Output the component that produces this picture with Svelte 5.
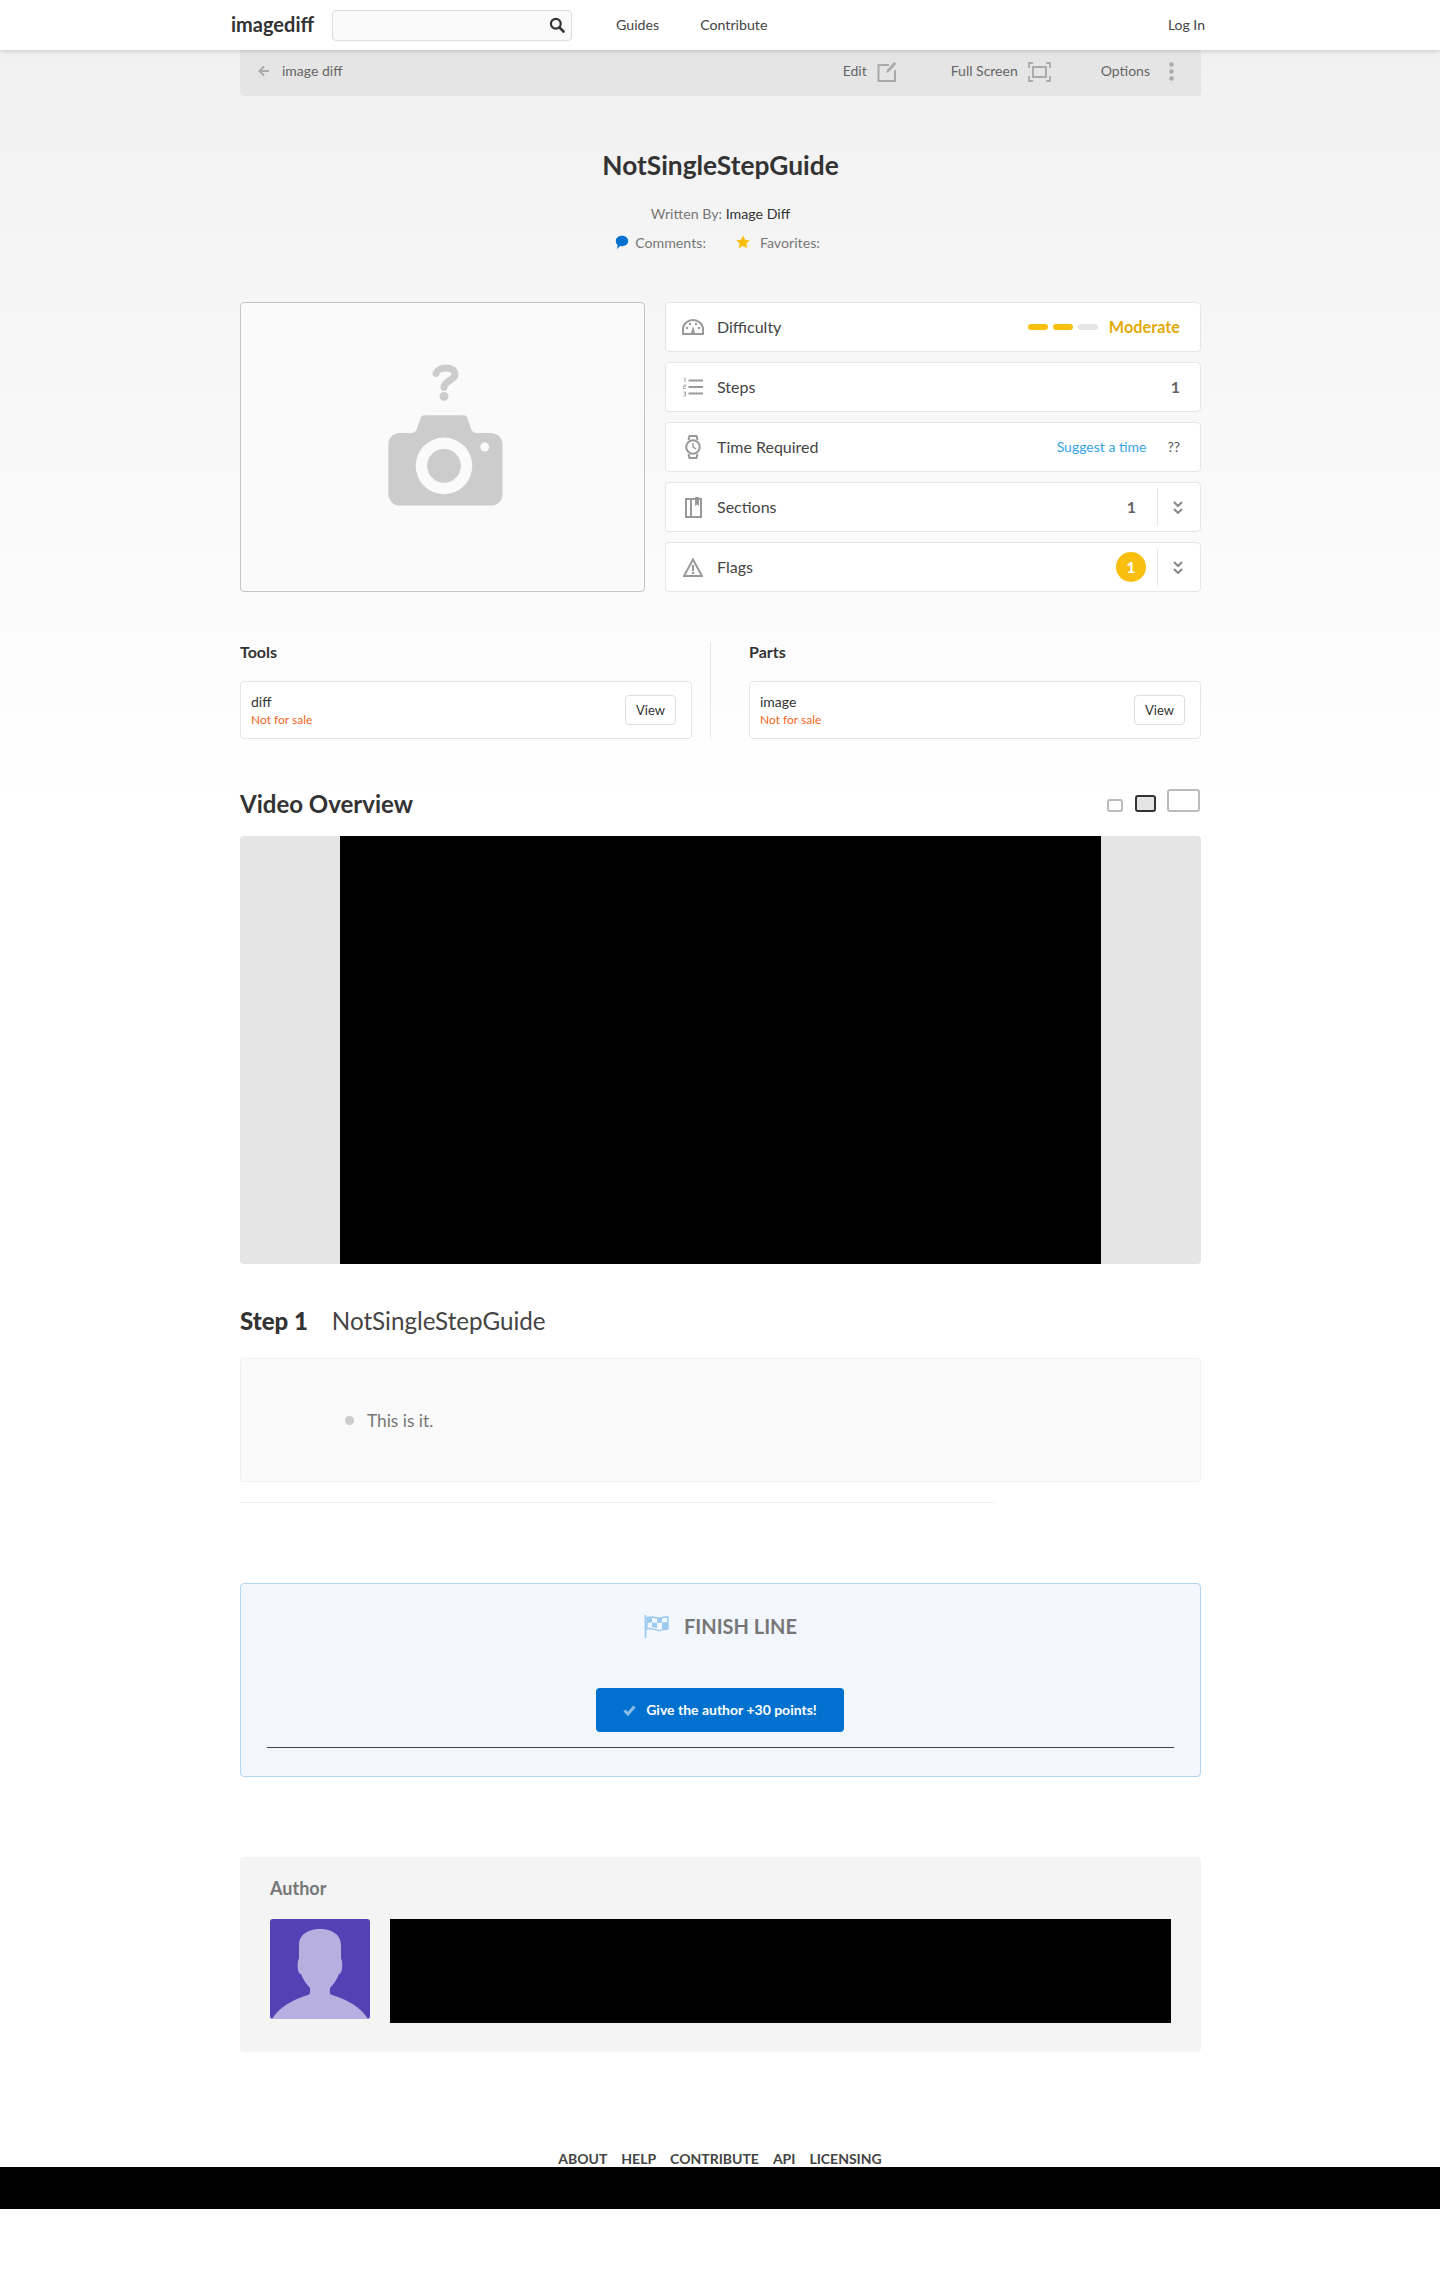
<script>
    const rows = [
        { label: 'Steps', value: '1' }
    ];
    const links = ['About', 'Help', 'Contribute', 'API', 'Licensing'];
</script>

<header class="topbar">
    <div class="topbar-inner">
        <a class="logo" href="#top">imagediff</a>
        <div class="search">
            <svg width="16" height="16" viewBox="0 0 16 16"><circle cx="6.800" cy="6.800" r="4.900" fill="none" stroke="#333" stroke-width="2.200"/><path d="M10.400 10.400 14.500 14.500" stroke="#333" stroke-width="2.600" stroke-linecap="round"/></svg>
        </div>
        <nav class="nav">
            <a href="#top">Guides</a>
            <a href="#top">Contribute</a>
        </nav>
        <a class="login" href="#top">Log In</a>
    </div>
</header>

<main class="page">
    <div class="toolbar">
        <a class="back" href="#top">
            <svg width="12" height="12" viewBox="0 0 12 12"><path d="M11 6H2M6 1.500 1.500 6 6 10.500" fill="none" stroke="#aaa" stroke-width="2"/></svg>
            <span>image diff</span>
        </a>
        <div class="actions">
            <a class="action edit" href="#top"><span>Edit</span>
                <svg width="20" height="21" viewBox="0 0 20 21"><path d="M12 4H1.500v16H18V9" fill="none" stroke="#aaa" stroke-width="2"/><path d="M9 12 10 9 17 1l2.500 1.500-7 8z" fill="#aaa"/></svg>
            </a>
            <a class="action full" href="#top"><span>Full Screen</span>
                <svg width="23" height="20" viewBox="0 0 23 20"><path d="M1 6V1h4M18 1h4v5M22 14v5h-4M5 19H1v-5" fill="none" stroke="#aaa" stroke-width="1.800"/><rect x="5" y="5" width="13" height="10" fill="none" stroke="#aaa" stroke-width="2"/></svg>
            </a>
            <a class="action options" href="#top"><span>Options</span>
                <svg width="5" height="19" viewBox="0 0 5 19"><circle cx="2.500" cy="2.500" r="2.200" fill="#aaa"/><circle cx="2.500" cy="9.500" r="2.200" fill="#aaa"/><circle cx="2.500" cy="16.500" r="2.200" fill="#aaa"/></svg>
            </a>
        </div>
    </div>

    <h1>NotSingleStepGuide</h1>
    <p class="byline">Written By: <a href="#top">Image Diff</a></p>
    <div class="meta">
        <span class="meta-item comments">
            <svg width="14" height="15" viewBox="0 0 14 15"><path d="M7 .8c3.400 0 6.200 2.200 6.200 5.200S10.400 11.200 7 11.200c-.7 0-1.300-.1-1.900-.2L1.800 14.200l1-3.900C1.400 9.100.8 7.700.8 6 .8 3 3.600.8 7 .8z" fill="#0071ce"/></svg>
            Comments:
        </span>
        <span class="meta-item">
            <svg width="14" height="14" viewBox="0 0 14 14"><path d="M7 .3l2.100 4.400 4.700.6-3.400 3.200.9 4.800L7 11l-4.300 2.300.9-4.800L.2 5.300l4.700-.6z" fill="#f9bf0f"/></svg>
            Favorites:
        </span>
    </div>

    <section class="hero">
        <div class="placeholder">
            <svg width="403" height="288" viewBox="0 0 405 290">
                <path d="M197 71C199 64 215 63 216 71 217 78 205 78 205 85" fill="none" stroke="#ccc" stroke-width="7" stroke-linecap="round"/>
                <circle cx="205" cy="94" r="4.500" fill="#ccc"/>
                <path d="M160 131h11c4 0 6-2 7-5l3-9c1-3 2-4 5-4h38c3 0 4 1 5 4l3 9c1 3 3 5 7 5h13c7 0 12 5 12 12v49c0 7-5 12-12 12h-91c-7 0-12-5-12-12v-49c0-7 5-12 11-12z" fill="#ccc"/>
                <circle cx="205" cy="164" r="28.500" fill="#fafafa"/>
                <circle cx="205" cy="164" r="17" fill="#ccc"/>
                <circle cx="246" cy="145" r="4.500" fill="#fafafa"/>
            </svg>
        </div>
        <div class="stats">
            <div class="stat">
                <span class="stat-icon">
                    <svg width="22" height="16" viewBox="0 0 22 16"><path d="M1 15V10a10 9 0 0 1 20 0v5z" fill="none" stroke="#999" stroke-width="2"/><path d="M11 7 9 14h4z" fill="#999"/><path d="M1 14h20v2H1z" fill="#999"/><circle cx="5" cy="9" r="1.200" fill="#999"/><circle cx="8" cy="5" r="1.200" fill="#999"/><circle cx="14" cy="5" r="1.200" fill="#999"/><circle cx="17" cy="9" r="1.200" fill="#999"/></svg>
                </span>
                <span class="stat-label">Difficulty</span>
                <span class="pills"><i class="on"></i><i class="on"></i><i></i></span>
                <span class="moderate">Moderate</span>
            </div>
            {#each rows as row}
                <div class="stat">
                    <span class="stat-icon">
                        <svg width="20" height="20" viewBox="0 0 20 20"><g fill="none" stroke="#999" stroke-width="1.800"><path d="M5.500 3.500H20M5.500 10H20M5.500 16.500H20"/></g><g stroke="#aaa" stroke-width="1" fill="none"><path d="M1 1.500l1-.8v4.500M.5 8h2v1.500h-2v2h2.200M.5 15h2v4h-2M1 17h1.500"/></g></svg>
                    </span>
                    <span class="stat-label">{row.label}</span>
                    <span class="stat-value">{row.value}</span>
                </div>
            {/each}
            <div class="stat">
                <span class="stat-icon">
                    <svg width="16" height="24" viewBox="0 0 16 24"><circle cx="8" cy="12" r="6.800" fill="none" stroke="#999" stroke-width="2"/><path d="M3.500 5 4.500 1h7l1 4M3.500 19l1 4h7l1-4" fill="none" stroke="#999" stroke-width="2"/><path d="M8 8v4l3 2" fill="none" stroke="#999" stroke-width="1.400"/></svg>
                </span>
                <span class="stat-label">Time Required</span>
                <a class="suggest" href="#top">Suggest a time</a>
                <span class="unknown">??</span>
            </div>
            <div class="stat split">
                <span class="stat-icon">
                    <svg width="17" height="21" viewBox="0 0 17 21"><path d="M1 2h15v18H1zM6 2v18" fill="none" stroke="#999" stroke-width="2"/><path d="M10 0h4v9l-2-1.500L10 9z" fill="#999"/></svg>
                </span>
                <span class="stat-label">Sections</span>
                <span class="stat-value">1</span>
                <span class="toggle">
                    <svg width="10" height="13" viewBox="0 0 10 13"><path d="M1 1l4 4 4-4M1 8l4 4 4-4" fill="none" stroke="#888" stroke-width="2"/></svg>
                </span>
            </div>
            <div class="stat split">
                <span class="stat-icon">
                    <svg width="20" height="19" viewBox="0 0 20 19"><path d="M10 1.500 1 18h18z" fill="none" stroke="#999" stroke-width="2"/><path d="M10 7v6M10 14v2" stroke="#999" stroke-width="2"/></svg>
                </span>
                <span class="stat-label">Flags</span>
                <span class="badge">1</span>
                <span class="toggle">
                    <svg width="10" height="13" viewBox="0 0 10 13"><path d="M1 1l4 4 4-4M1 8l4 4 4-4" fill="none" stroke="#888" stroke-width="2"/></svg>
                </span>
            </div>
        </div>
    </section>

    <section class="supplies">
        <div class="supply">
            <h3>Tools</h3>
            <div class="item">
                <div>
                    <div class="item-name">diff</div>
                    <div class="item-note">Not for sale</div>
                </div>
                <button>View</button>
            </div>
        </div>
        <div class="supply">
            <h3>Parts</h3>
            <div class="item">
                <div>
                    <div class="item-name">image</div>
                    <div class="item-note">Not for sale</div>
                </div>
                <button>View</button>
            </div>
        </div>
    </section>

    <div class="video-head">
        <h2>Video Overview</h2>
        <div class="sizes">
            <span class="size small"></span>
            <span class="size medium"></span>
            <span class="size large"></span>
        </div>
    </div>
    <div class="video"><div class="video-frame"></div></div>

    <h2 class="step-title"><strong>Step 1</strong><span>NotSingleStepGuide</span></h2>
    <div class="step-box">
        <ul><li>This is it.</li></ul>
    </div>
    <hr />

    <section class="finish">
        <div class="finish-title">
            <svg width="25" height="23" viewBox="0 0 25 23">
                <path d="M1.500 0v23" stroke="#9cc9ee" stroke-width="1.800"/>
                <path d="M3 3c6-3 8 1 13 0 3-.6 5-1.200 8-1v12c-3-.2-5 1-8 1.400-5 .6-7-3.400-13-1.400z" fill="none" stroke="#9cc9ee" stroke-width="1.400"/>
                <path d="M3 3l5-.6v4.800l-5 1zM13 3l5-.6v5l-5 .6zM8 7.200l5 1v5l-5-1.400zM18 7.400l6-.4v7l-6 .4z" fill="#9cc9ee"/>
            </svg>
            FINISH LINE
        </div>
        <button class="points">
            <svg width="13" height="11" viewBox="0 0 13 11"><path d="M1.500 5.500 5 9l6.500-7.500" fill="none" stroke="#8fbde9" stroke-width="3"/></svg>
            <span>Give the author +30 points!</span>
        </button>
        <div class="finish-line"></div>
    </section>

    <section class="author">
        <h4>Author</h4>
        <div class="author-row">
            <svg class="avatar" width="100" height="100" viewBox="0 0 100 100">
                <rect width="100" height="100" rx="3" fill="#5442b4"/>
                <path d="M2 100C9 88 24 80 38 76 41 75 40 72 40 69 36 65 33 60 31 55 27 55 27 41 29 40V26C29 15 39 10 50 10S71 15 71 26V40C73 41 73 55 69 55 67 60 64 65 60 69 60 72 59 75 62 76 76 80 91 88 98 100z" fill="#b7afdf"/>
            </svg>
            <div class="author-bio"></div>
        </div>
    </section>
</main>

<footer class="footer">
    <nav class="footer-links">
        {#each links as link}
            <a href="#top">{link}</a>
        {/each}
    </nav>
    <div class="footer-band"></div>
</footer>

<style>
    :global(body) {
        margin: 0;
        min-height: 2283px;
        font-family: Lato, "Liberation Sans", sans-serif;
        color: #333;
        background: linear-gradient(#f1f1f1 50px, #fff 800px) no-repeat #fff;
    }

    a {
        color: inherit;
        text-decoration: none;
    }

    .topbar {
        position: relative;
        z-index: 2;
        height: 50px;
        background: #fff;
        box-shadow: 0 1px 5px rgba(0,0,0,0.18);
    }

    .topbar-inner {
        width: 974px;
        height: 50px;
        margin: 0 auto 0 231px;
        display: flex;
        align-items: center;
        font-size: 14px;
    }

    .logo {
        width: 101px;
        padding-bottom: 2px;
        font-size: 20px;
        font-weight: 700;
    }

    .search {
        box-sizing: border-box;
        width: 240px;
        height: 31px;
        padding-right: 6px;
        display: flex;
        align-items: center;
        justify-content: flex-end;
        background: #fafafa;
        border: 1px solid #ddd;
        border-radius: 4px;
    }

    .nav {
        display: flex;
        gap: 41px;
        margin-left: 44px;
        padding-bottom: 2px;
        font-size: 14.200px;
        color: #444;
    }

    .login {
        margin-left: auto;
        padding-bottom: 2px;
        color: #444;
    }

    .page {
        width: 961px;
        margin-left: 240px;
    }

    .toolbar {
        box-sizing: border-box;
        height: 46px;
        padding: 0 27px 0 18px;
        display: flex;
        align-items: center;
        justify-content: space-between;
        background: #e5e5e5;
        border-radius: 0 0 4px 4px;
        font-size: 14px;
        color: #666;
    }

    .toolbar span {
        padding-bottom: 6px;
    }

    .back, .action {
        display: flex;
        align-items: center;
    }

    .back {
        gap: 12px;
    }

    .back svg {
        margin-bottom: 5px;
    }

    .action svg {
        margin-bottom: 3px;
    }

    .actions {
        display: flex;
        align-items: center;
    }

    .action {
        gap: 10px;
    }

    .edit {
        margin-right: 54px;
    }

    .full {
        margin-right: 50px;
    }

    .options {
        gap: 19px;
    }

    h1 {
        margin: 53px 0 0;
        font-size: 26.300px;
        line-height: 32px;
        font-weight: 700;
        text-align: center;
    }

    .byline {
        margin: 23px 0 0;
        font-size: 14.200px;
        line-height: 20px;
        text-align: center;
        color: #777;
    }

    .byline a {
        color: #333;
    }

    .meta {
        margin-top: 8px;
        height: 20px;
        padding-right: 6px;
        display: flex;
        justify-content: center;
        gap: 30px;
        font-size: 14.200px;
        color: #777;
    }

    .meta-item {
        display: flex;
        align-items: center;
        gap: 10px;
    }

    .comments {
        gap: 6px;
    }

    .hero {
        margin-top: 50px;
        display: flex;
        justify-content: space-between;
    }

    .placeholder {
        box-sizing: border-box;
        width: 405px;
        height: 290px;
        background: #fafafa;
        border: 1px solid #c4c4c4;
        border-radius: 4px;
    }

    .placeholder svg {
        display: block;
        margin-left: -1px;
    }

    .stats {
        width: 536px;
        display: flex;
        flex-direction: column;
        gap: 10px;
    }

    .stat {
        box-sizing: border-box;
        height: 50px;
        padding-right: 20px;
        display: flex;
        align-items: center;
        background: #fff;
        border: 1px solid #e6e6e6;
        border-radius: 4px;
        font-size: 16px;
    }

    .split {
        padding-right: 0;
    }

    .stat-icon {
        width: 24px;
        margin: 0 12px 0 15px;
        display: flex;
        justify-content: center;
    }

    .stat-label {
        flex: 1;
        padding-bottom: 2px;
        color: #444;
    }

    .stat-value {
        padding-bottom: 2px;
        font-weight: 700;
        color: #666;
    }

    .pills {
        display: flex;
        gap: 5px;
        margin-right: 11px;
    }

    .pills i {
        width: 20px;
        height: 6px;
        border-radius: 3px;
        background: #e5e5e5;
    }

    .pills .on {
        background: #f9bf0f;
    }

    .moderate {
        padding-bottom: 2px;
        font-size: 16.300px;
        font-weight: 700;
        color: #e2ab07;
    }

    .suggest {
        margin-right: 21px;
        padding-bottom: 1px;
        font-size: 14px;
        color: #36a4e0;
    }

    .unknown {
        padding-bottom: 1px;
        font-size: 14px;
        color: #555;
    }

    .toggle {
        box-sizing: border-box;
        width: 43px;
        height: 37px;
        margin-left: 21px;
        padding-right: 2px;
        display: flex;
        align-items: center;
        justify-content: center;
        border-left: 1px solid #e6e6e6;
    }

    .badge {
        width: 30px;
        height: 30px;
        margin-right: -10px;
        padding-bottom: 2px;
        box-sizing: border-box;
        display: flex;
        align-items: center;
        justify-content: center;
        border-radius: 50%;
        background: #f9bf0f;
        color: #fff;
        font-weight: 700;
    }

    .supplies {
        margin-top: 50px;
        display: grid;
        grid-template-columns: 471px 490px;
    }

    .supply:first-child {
        box-sizing: border-box;
        padding-right: 18px;
        border-right: 1px solid #e6e6e6;
    }

    .supply:last-child {
        padding-left: 38px;
    }

    h3 {
        margin: -1px 0 18px;
        font-size: 16px;
        line-height: 22px;
        font-weight: 700;
    }

    .item {
        box-sizing: border-box;
        height: 58px;
        padding: 0 15px 0 10px;
        display: flex;
        align-items: center;
        justify-content: space-between;
        background: #fff;
        border: 1px solid #e6e6e6;
        border-radius: 4px;
    }

    .item-name {
        font-size: 14px;
        line-height: 18px;
    }

    .item-note {
        padding-top: 1px;
        font-size: 12px;
        line-height: 16px;
        color: #f4661b;
    }

    .item button {
        width: 51px;
        height: 30px;
        padding: 0;
        background: #fff;
        border: 1px solid #ddd;
        border-radius: 4px;
        font: 13px Lato, "Liberation Sans", sans-serif;
        color: #333;
    }

    .video-head {
        margin-top: 50px;
        height: 30px;
        display: flex;
        justify-content: space-between;
    }

    h2 {
        margin: 0;
        font-size: 24px;
        line-height: 30px;
        font-weight: 700;
    }

    .sizes {
        height: 23px;
        margin-right: 1px;
        display: flex;
        align-items: flex-end;
        gap: 12px;
    }

    .size {
        box-sizing: border-box;
        border: 2px solid #bbb;
        border-radius: 3px;
    }

    .small {
        width: 16px;
        height: 13px;
    }

    .medium {
        width: 21px;
        height: 17px;
        background: #e5e5e5;
        border-color: #333;
        margin-right: -1px;
    }

    .large {
        width: 33px;
        height: 23px;
    }

    .video {
        margin-top: 17px;
        height: 428px;
        display: flex;
        padding-left: 100px;
        background: #e5e5e5;
        border-radius: 4px;
    }

    .video-frame {
        width: 761px;
        background: #000;
    }

    .step-title {
        margin-top: 40px;
        line-height: 34px;
        display: flex;
        gap: 24px;
    }

    .step-title span {
        font-size: 24.200px;
        font-weight: 400;
        color: #444;
    }

    .step-box {
        box-sizing: border-box;
        height: 124px;
        margin-top: 20px;
        padding-left: 126px;
        display: flex;
        align-items: center;
        background: #fafafa;
        border: 1px solid #f0f0f0;
        border-radius: 4px;
    }

    ul {
        margin: 0;
        padding: 0;
        list-style: none;
    }

    li {
        display: flex;
        align-items: center;
        gap: 13px;
        font-size: 17.300px;
        color: #777;
    }

    li::before {
        content: "";
        width: 9px;
        height: 9px;
        margin-left: -22px;
        border-radius: 50%;
        background: #ccc;
    }

    hr {
        width: 755px;
        height: 1px;
        margin: 20px 0 0;
        border: 0;
        background: #f0f0f0;
    }

    .finish {
        box-sizing: border-box;
        height: 194px;
        margin-top: 80px;
        padding: 27px 26px 0;
        display: flex;
        flex-direction: column;
        align-items: center;
        background: #f2f7fe;
        border: 1px solid #b3d6f2;
        border-radius: 4px;
    }

    .finish-title {
        height: 30px;
        display: flex;
        align-items: center;
        gap: 15px;
        font-size: 20px;
        font-weight: 700;
        color: #777;
    }

    .points {
        width: 248px;
        height: 44px;
        margin: 47px 1px 0 0;
        display: flex;
        align-items: center;
        justify-content: center;
        gap: 10px;
        background: #0071ce;
        border: 0;
        border-radius: 4px;
        font: 700 14px Lato, "Liberation Sans", sans-serif;
        color: #fff;
    }

    .points span {
        padding-bottom: 2px;
    }

    .finish-line {
        width: 100%;
        height: 1px;
        margin-top: 15px;
        background: #444;
    }

    .author {
        box-sizing: border-box;
        height: 195px;
        margin-top: 80px;
        padding: 19px 30px 0;
        background: #f4f4f4;
        border-radius: 4px;
    }

    h4 {
        margin: 0;
        font-size: 18px;
        line-height: 24px;
        font-weight: 700;
        color: #777;
    }

    .author-row {
        margin-top: 19px;
        display: flex;
        gap: 20px;
    }

    .avatar {
        flex: none;
    }

    .author-bio {
        flex: 1;
        height: 104px;
        background: #000;
    }

    .footer {
        margin-top: 99px;
    }

    .footer-links {
        display: flex;
        justify-content: center;
        gap: 14px;
        font-size: 14px;
        line-height: 16px;
        font-weight: 700;
        color: #444;
        text-transform: uppercase;
    }

    .footer-band {
        height: 42px;
        background: #000;
    }
</style>
